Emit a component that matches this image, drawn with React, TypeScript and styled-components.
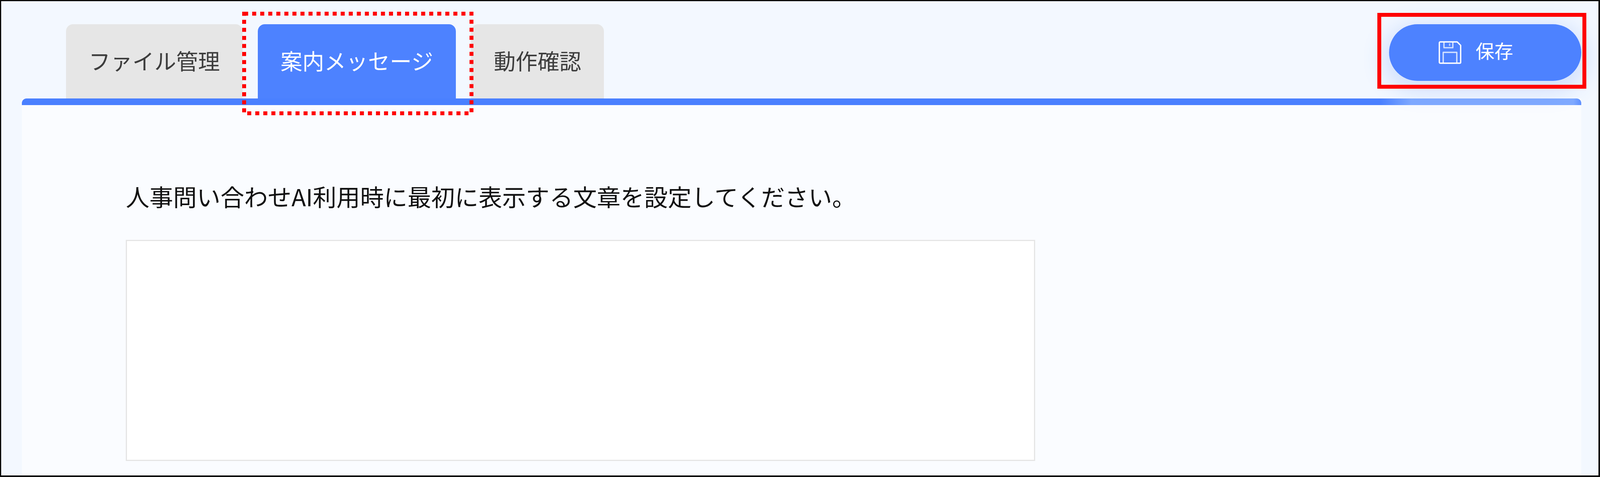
import React from 'react';
import styled, { createGlobalStyle } from 'styled-components';

const GlobalStyle = createGlobalStyle`
  html, body {
    margin: 0;
    padding: 0;
  }
  body {
    font-family: "Noto Sans CJK JP", "Noto Sans", sans-serif;
  }
`;

const Frame = styled.div`
  position: relative;
  box-sizing: border-box;
  display: flex;
  flex-direction: column;
  width: 100vw;
  height: 1221px;
  padding: 0 44px 0 53px;
  overflow: hidden;
  background: #f3f8ff;
  border-style: solid;
  border-color: #0a0a0a;
  border-width: 3px 4px 4px 3px;
`;

const Header = styled.header`
  display: flex;
  justify-content: space-between;
  align-items: flex-start;
  padding-top: 59px;
`;

const Tabs = styled.nav`
  display: flex;
  gap: 39px;
  padding-left: 113px;
`;

const Tab = styled.div<{ $active?: boolean }>`
  position: relative;
  z-index: 1;
  display: flex;
  align-items: center;
  justify-content: center;
  height: 190px;
  padding: 0 58px 8px;
  box-sizing: border-box;
  font-size: 56px;
  border-radius: 18px 18px 0 0;
  color: ${props => (props.$active ? '#ffffff' : '#3d3d3d')};
  background: ${props => (props.$active ? '#4d82ff' : '#e6e6e6')};
`;

const SaveButton = styled.button`
  position: relative;
  z-index: 2;
  display: flex;
  align-items: center;
  justify-content: center;
  gap: 36px;
  width: 492px;
  height: 145px;
  padding: 0 47px 0 0;
  border: 0;
  border-radius: 73px;
  font-family: inherit;
  font-size: 48px;
  color: #ffffff;
  background: #4d82ff;
  box-shadow: 0 14px 56px 14px rgba(70, 125, 245, 0.2);
`;

const SaveLabel = styled.span`
  margin-bottom: 14px;
`;

const Panel = styled.main`
  flex: 1;
  display: flex;
  flex-direction: column;
  align-items: flex-start;
  background: #fafcff;
`;

const PanelBar = styled.div`
  align-self: stretch;
  height: 17px;
  border-radius: 12px 12px 0 0;
  box-shadow: 0 -1px 0 rgba(255, 255, 255, 0.8);
  background: linear-gradient(
    90deg,
    #4a80ff 0,
    #4a80ff calc(100% - 515px),
    #80aaff calc(100% - 435px),
    #80aaff calc(100% - 20px),
    #5f90ff 100%
  );
`;

const Prompt = styled.p`
  margin: 193px 0 72px 266px;
  font-size: 60.6px;
  line-height: 80px;
  white-space: nowrap;
  color: #111111;
`;

const MessageInput = styled.textarea`
  box-sizing: border-box;
  display: block;
  width: 2328px;
  height: 566px;
  margin-left: 266px;
  border: 3px solid #e5e5e5;
  background: #ffffff;
  resize: none;
  outline: none;
`;

const DottedMark = styled.svg`
  position: absolute;
  z-index: 3;
  left: 617px;
  top: 27px;
  width: 592px;
  height: 265px;
`;

const SolidMark = styled.div`
  position: absolute;
  z-index: 3;
  right: 31px;
  top: 30px;
  box-sizing: border-box;
  width: 535px;
  height: 194px;
  border: 10px solid #ff0000;
`;

const SaveIcon = () => (
  <svg width="58" height="59" viewBox="0 0 24 24" fill="none" stroke="#ffffff" strokeWidth="1.4" strokeLinejoin="round">
    <path d="M1.6 0.7H19.6L23.3 4.4V22.3a1 1 0 0 1-1 1H1.7a1 1 0 0 1-1-1V1.7a1 1 0 0 1 1-1z" />
    <path d="M5.6 0.7V6.9H15V0.7" strokeOpacity="0.75" />
    <path d="M11.6 2.4V5" strokeOpacity="0.6" />
    <path d="M4.8 23.3V11.8H19.2V23.3" strokeOpacity="0.75" />
  </svg>
);

export default function App() {
  return (
    <>
      <GlobalStyle />
      <Frame>
        <Header>
          <Tabs>
            <Tab>ファイル管理</Tab>
            <Tab $active>案内メッセージ</Tab>
            <Tab>動作確認</Tab>
          </Tabs>
          <SaveButton>
            <SaveIcon />
            <SaveLabel>保存</SaveLabel>
          </SaveButton>
        </Header>
        <Panel>
          <PanelBar />
          <Prompt>人事問い合わせAI利用時に最初に表示する文章を設定してください。</Prompt>
          <MessageInput />
        </Panel>
        <DottedMark viewBox="0 0 592 265">
          <rect x="5" y="5" width="582" height="255" fill="none" stroke="#ff0000" strokeWidth="10" strokeDasharray="10.3 10.3" />
        </DottedMark>
        <SolidMark />
      </Frame>
    </>
  );
}
